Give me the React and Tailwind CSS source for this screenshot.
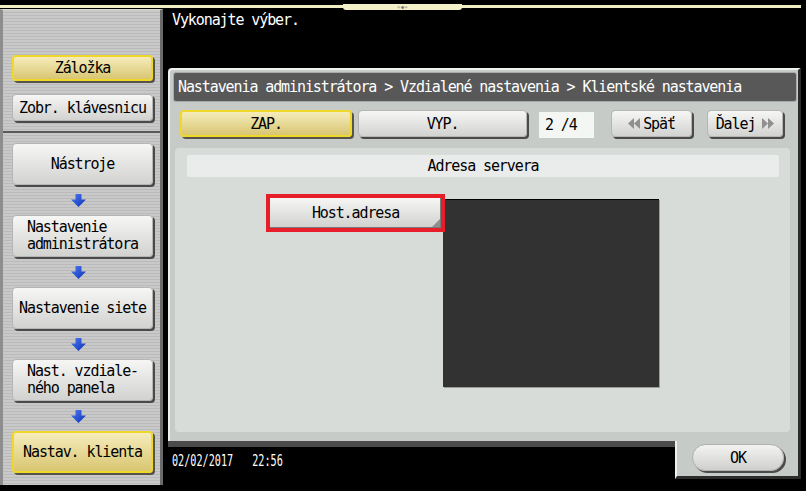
import React from "react";

const mono = "font-['DejaVu_Sans_Mono','Liberation_Mono',monospace] text-[15px] tracking-[-1.1px] leading-[16px]";
const grayBtn =
  "bg-[linear-gradient(#f6f6f4,#d2d3d1)] border border-[#b5b6b4] rounded-[4px] shadow-[2px_2px_0_#4a4a4a] text-black";
const yellowBtn =
  "bg-[linear-gradient(#f5ecbb,#d9c672)] border-2 border-[#f0d82a] rounded-[4px] shadow-[2px_2px_0_#56544a] text-black";

function DownArrow() {
  return (
    <svg width="15" height="13" viewBox="0 0 15 13">
      <defs>
        <linearGradient id="ab" x1="0" y1="0" x2="1" y2="1">
          <stop offset="0" stopColor="#4f7cf2" />
          <stop offset="1" stopColor="#0a2fb4" />
        </linearGradient>
      </defs>
      <path d="M4.5 0 H10.5 V5.5 H15 L7.5 13 L0 5.5 H4.5 Z" fill="url(#ab)" />
    </svg>
  );
}

function DoubleLeft() {
  return (
    <svg width="13" height="11" viewBox="0 0 13 11">
      <polygon points="6,0 0,5.5 6,11" fill="#8f8f8f" />
      <polygon points="12,0 6,5.5 12,11" fill="#8f8f8f" />
    </svg>
  );
}

function DoubleRight() {
  return (
    <svg width="13" height="11" viewBox="0 0 13 11">
      <polygon points="1,0 7,5.5 1,11" fill="#8f8f8f" />
      <polygon points="7,0 13,5.5 7,11" fill="#8f8f8f" />
    </svg>
  );
}

function SideButton({ children, yellow, left }) {
  return (
    <div
      className={`ml-[9px] w-[141px] h-[42px] flex items-center ${
        left ? "justify-start pl-[14px] leading-[17px]" : "justify-center"
      } ${yellow ? yellowBtn : grayBtn}`}
    >
      <div className="text-left">{children}</div>
    </div>
  );
}

function ArrowZone() {
  return (
    <div className="h-[30px] w-[150px] flex items-center justify-center">
      <DownArrow />
    </div>
  );
}

export default function App() {
  return (
    <div className={`w-[806px] h-[491px] bg-black flex flex-col overflow-hidden ${mono}`}>
      {/* top strip */}
      <div className="h-[9px] relative">
        <div className="mt-[5px] h-[3px] w-[801px] bg-[#f1edc3]" />
        <div className="absolute left-[343px] top-[4px] w-[119px] h-[6px] bg-[#f4f1c9] rounded-b-[3px] flex items-center justify-center">
          <span className="text-[6px] leading-[6px] tracking-[0px] text-[#777]">«◆»</span>
        </div>
      </div>

      <div className="flex">
        {/* left panel */}
        <div className="w-[163px] h-[476px] flex flex-col border-l-[3px] border-l-[#8d8d8d] border-r-[3px] border-r-[#6a6a6a] border-t border-t-[#dcdccc] bg-[repeating-linear-gradient(180deg,#c9c9c9_0px,#c9c9c9_2px,#bababa_2px,#bababa_3px)]">
          <div className="h-[121px] pt-[45px] flex flex-col">
            <div className={`ml-[9px] w-[141px] h-[26px] flex items-center justify-center ${yellowBtn}`}>
              Záložka
            </div>
            <div className={`mt-[13px] ml-[9px] w-[141px] h-[27px] flex items-center justify-center ${grayBtn}`}>
              Zobr. klávesnicu
            </div>
          </div>
          <div className="h-[2px] bg-[#5a5a5a]" />
          <div className="pt-[10px] flex flex-col">
            <SideButton>Nástroje</SideButton>
            <ArrowZone />
            <SideButton left>
              Nastavenie
              <br />
              administrátora
            </SideButton>
            <ArrowZone />
            <SideButton>Nastavenie siete</SideButton>
            <ArrowZone />
            <SideButton left>
              Nast. vzdiale-
              <br />
              ného panela
            </SideButton>
            <ArrowZone />
            <SideButton yellow>Nastav. klienta</SideButton>
          </div>
        </div>

        {/* main column */}
        <div className="flex-1 flex flex-col">
          <div className="h-[59px] pt-[3px] pl-[9px] text-white">Vykonajte výber.</div>

          {/* dialog */}
          <div className="ml-[5px] w-[633px] flex flex-col">
            <div className="h-[373px] bg-[#c7cbc8] border-t-2 border-l-2 border-[#eef1ee] border-r-[3px] border-r-[#2c2c2c] rounded-tl-[4px] flex flex-col">
              <div className="mt-[2px] ml-[3px] mr-[1px] h-[30px] bg-[#585858] border border-[#a9aaa9] rounded-[3px] flex items-center pl-[4px] text-white whitespace-nowrap">
                Nastavenia administrátora &gt; Vzdialené nastavenia &gt; Klientské nastavenia
              </div>

              <div className="mt-[8px] h-[29px] pl-[10px] flex items-start">
                <div className={`w-[172px] h-[27px] flex items-center justify-center ${yellowBtn}`}>ZAP.</div>
                <div className={`ml-[6px] w-[169px] h-[27px] flex items-center justify-center ${grayBtn}`}>VYP.</div>
                <div className="ml-[12px] mt-[2px] w-[55px] h-[26px] bg-[#f4f6f4] flex items-center pl-[6px] text-black">
                  2 /4
                </div>
                <div className={`ml-[17px] w-[81px] h-[27px] flex items-center justify-center gap-[2px] ${grayBtn}`}>
                  <DoubleLeft />
                  <span>Späť</span>
                </div>
                <div className={`ml-[15px] w-[76px] h-[27px] flex items-center justify-center gap-[6px] ${grayBtn}`}>
                  <span>Ďalej</span>
                  <DoubleRight />
                </div>
              </div>

              <div className="mt-[9px] ml-[5px] w-[615px] h-[284px] bg-[#d8dcd9] rounded-[4px] flex flex-col">
                <div className="mt-[7px] ml-[12px] w-[592px] h-[22px] bg-[#e9ecea] rounded-[2px] flex items-center justify-center text-black">
                  Adresa servera
                </div>
                <div className="mt-[17px] pl-[91px] flex items-start">
                  <div className="relative z-10 w-[179px] h-[38px] border-4 border-[#e61e2a] bg-[#e61e2a]">
                    <div className="relative w-full h-full bg-[linear-gradient(#f6f6f4,#d0d1cf)] shadow-[inset_-1px_-1px_0_#7a7a7a] flex items-center justify-center text-black">
                      Host.adresa
                      <svg className="absolute right-[1px] bottom-[1px]" width="8" height="8" viewBox="0 0 8 8">
                        <polygon points="8,0 8,8 0,8" fill="#8e8e8e" />
                      </svg>
                    </div>
                  </div>
                  <div className="-ml-[2px] mt-[5px] w-[216px] h-[188px] bg-[#323232] border-t border-black shadow-[1px_1px_0_#9c9c9c]" />
                </div>
              </div>
            </div>

            {/* bottom row with notch */}
            <div className="flex h-[38px]">
              <div className="w-[507px] flex flex-col">
                <div className="h-[6px] bg-[#4b4b4b]" />
                <div className="mt-[5px] pl-[4px] text-white text-[16px] leading-[18px] tracking-[0px] whitespace-nowrap">
                  <span className="inline-block origin-left scale-x-[0.635]">
                    02/02/2017<span className="ml-[30px]">22:56</span>
                  </span>
                </div>
              </div>
              <div className="flex-1 bg-[#c7cbc8] border-l-2 border-l-[#eef1ee] border-r-[3px] border-b-[3px] border-r-[#2c2c2c] border-b-[#2c2c2c]">
                <div className="ml-[15px] mt-[3px] w-[92px] h-[27px] rounded-full bg-[linear-gradient(#f3f3f1,#cfd0ce)] border border-[#b0b0ae] shadow-[2px_2px_0_#4a4a4a] flex items-center justify-center text-black">
                  OK
                </div>
              </div>
            </div>
          </div>
        </div>
      </div>
    </div>
  );
}
